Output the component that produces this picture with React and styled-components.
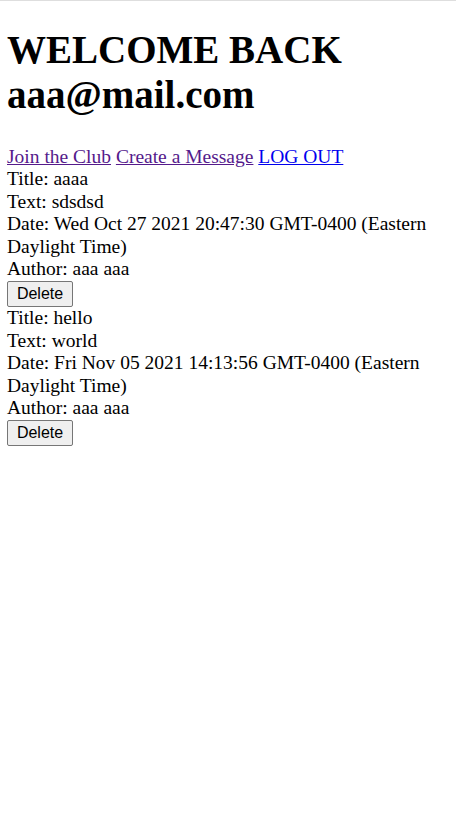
import React from 'react';
import styled, { createGlobalStyle } from 'styled-components';

const GlobalStyle = createGlobalStyle`
  html, body {
    margin: 0;
    padding: 0;
    background: #ffffff;
  }
  body {
    font-family: "Liberation Serif", "Times New Roman", serif;
    font-size: 19.5px;
    line-height: 22.4px;
    color: #000000;
  }
`;

const messages = [
  {
    id: 1,
    title: 'aaaa',
    text: 'sdsdsd',
    date: 'Wed Oct 27 2021 20:47:30 GMT-0400 (Eastern Daylight Time)',
    author: 'aaa aaa',
  },
  {
    id: 2,
    title: 'hello',
    text: 'world',
    date: 'Fri Nov 05 2021 14:13:56 GMT-0400 (Eastern Daylight Time)',
    author: 'aaa aaa',
  },
];

const App = () => (
  <Page>
    <GlobalStyle />
    <Heading>WELCOME BACK aaa@mail.com</Heading>
    <Nav>
      <NavLink href="#club" $visited>Join the Club</NavLink>{' '}
      <NavLink href="#create" $visited>Create a Message</NavLink>{' '}
      <NavLink href="#logout">LOG OUT</NavLink>
    </Nav>
    {messages.map((m) => (
      <Message key={m.id}>
        <Line>Title: {m.title}</Line>
        <Line>Text: {m.text}</Line>
        <Line>Date: {m.date}</Line>
        <Line>Author: {m.author}</Line>
        <ButtonRow>
          <DeleteButton type="button">Delete</DeleteButton>
        </ButtonRow>
      </Message>
    ))}
  </Page>
);

const Page = styled.div`
  border-top: 1px solid #dedede;
  padding: 0 8px 8px 7px;
`;

const Heading = styled.h1`
  font-size: 39px;
  line-height: normal;
  font-weight: bold;
  margin: 26px 0 29px;
`;

const Nav = styled.div``;

const NavLink = styled.a`
  color: ${(p) => (p.$visited ? '#551a8b' : '#0000ee')};
  text-decoration: underline;
  cursor: pointer;
`;

const Message = styled.div``;

const Line = styled.div``;

const ButtonRow = styled.div`
  padding-top: 1px;
`;

const DeleteButton = styled.button`
  box-sizing: border-box;
  width: 66px;
  height: 26px;
  font-family: "Liberation Sans", Arial, sans-serif;
  font-size: 16px;
  color: #000000;
  background: #efefef;
  border: 1px solid #767676;
  border-radius: 2px;
  padding: 0 8px;
  margin: 0;
`;

export default App;
